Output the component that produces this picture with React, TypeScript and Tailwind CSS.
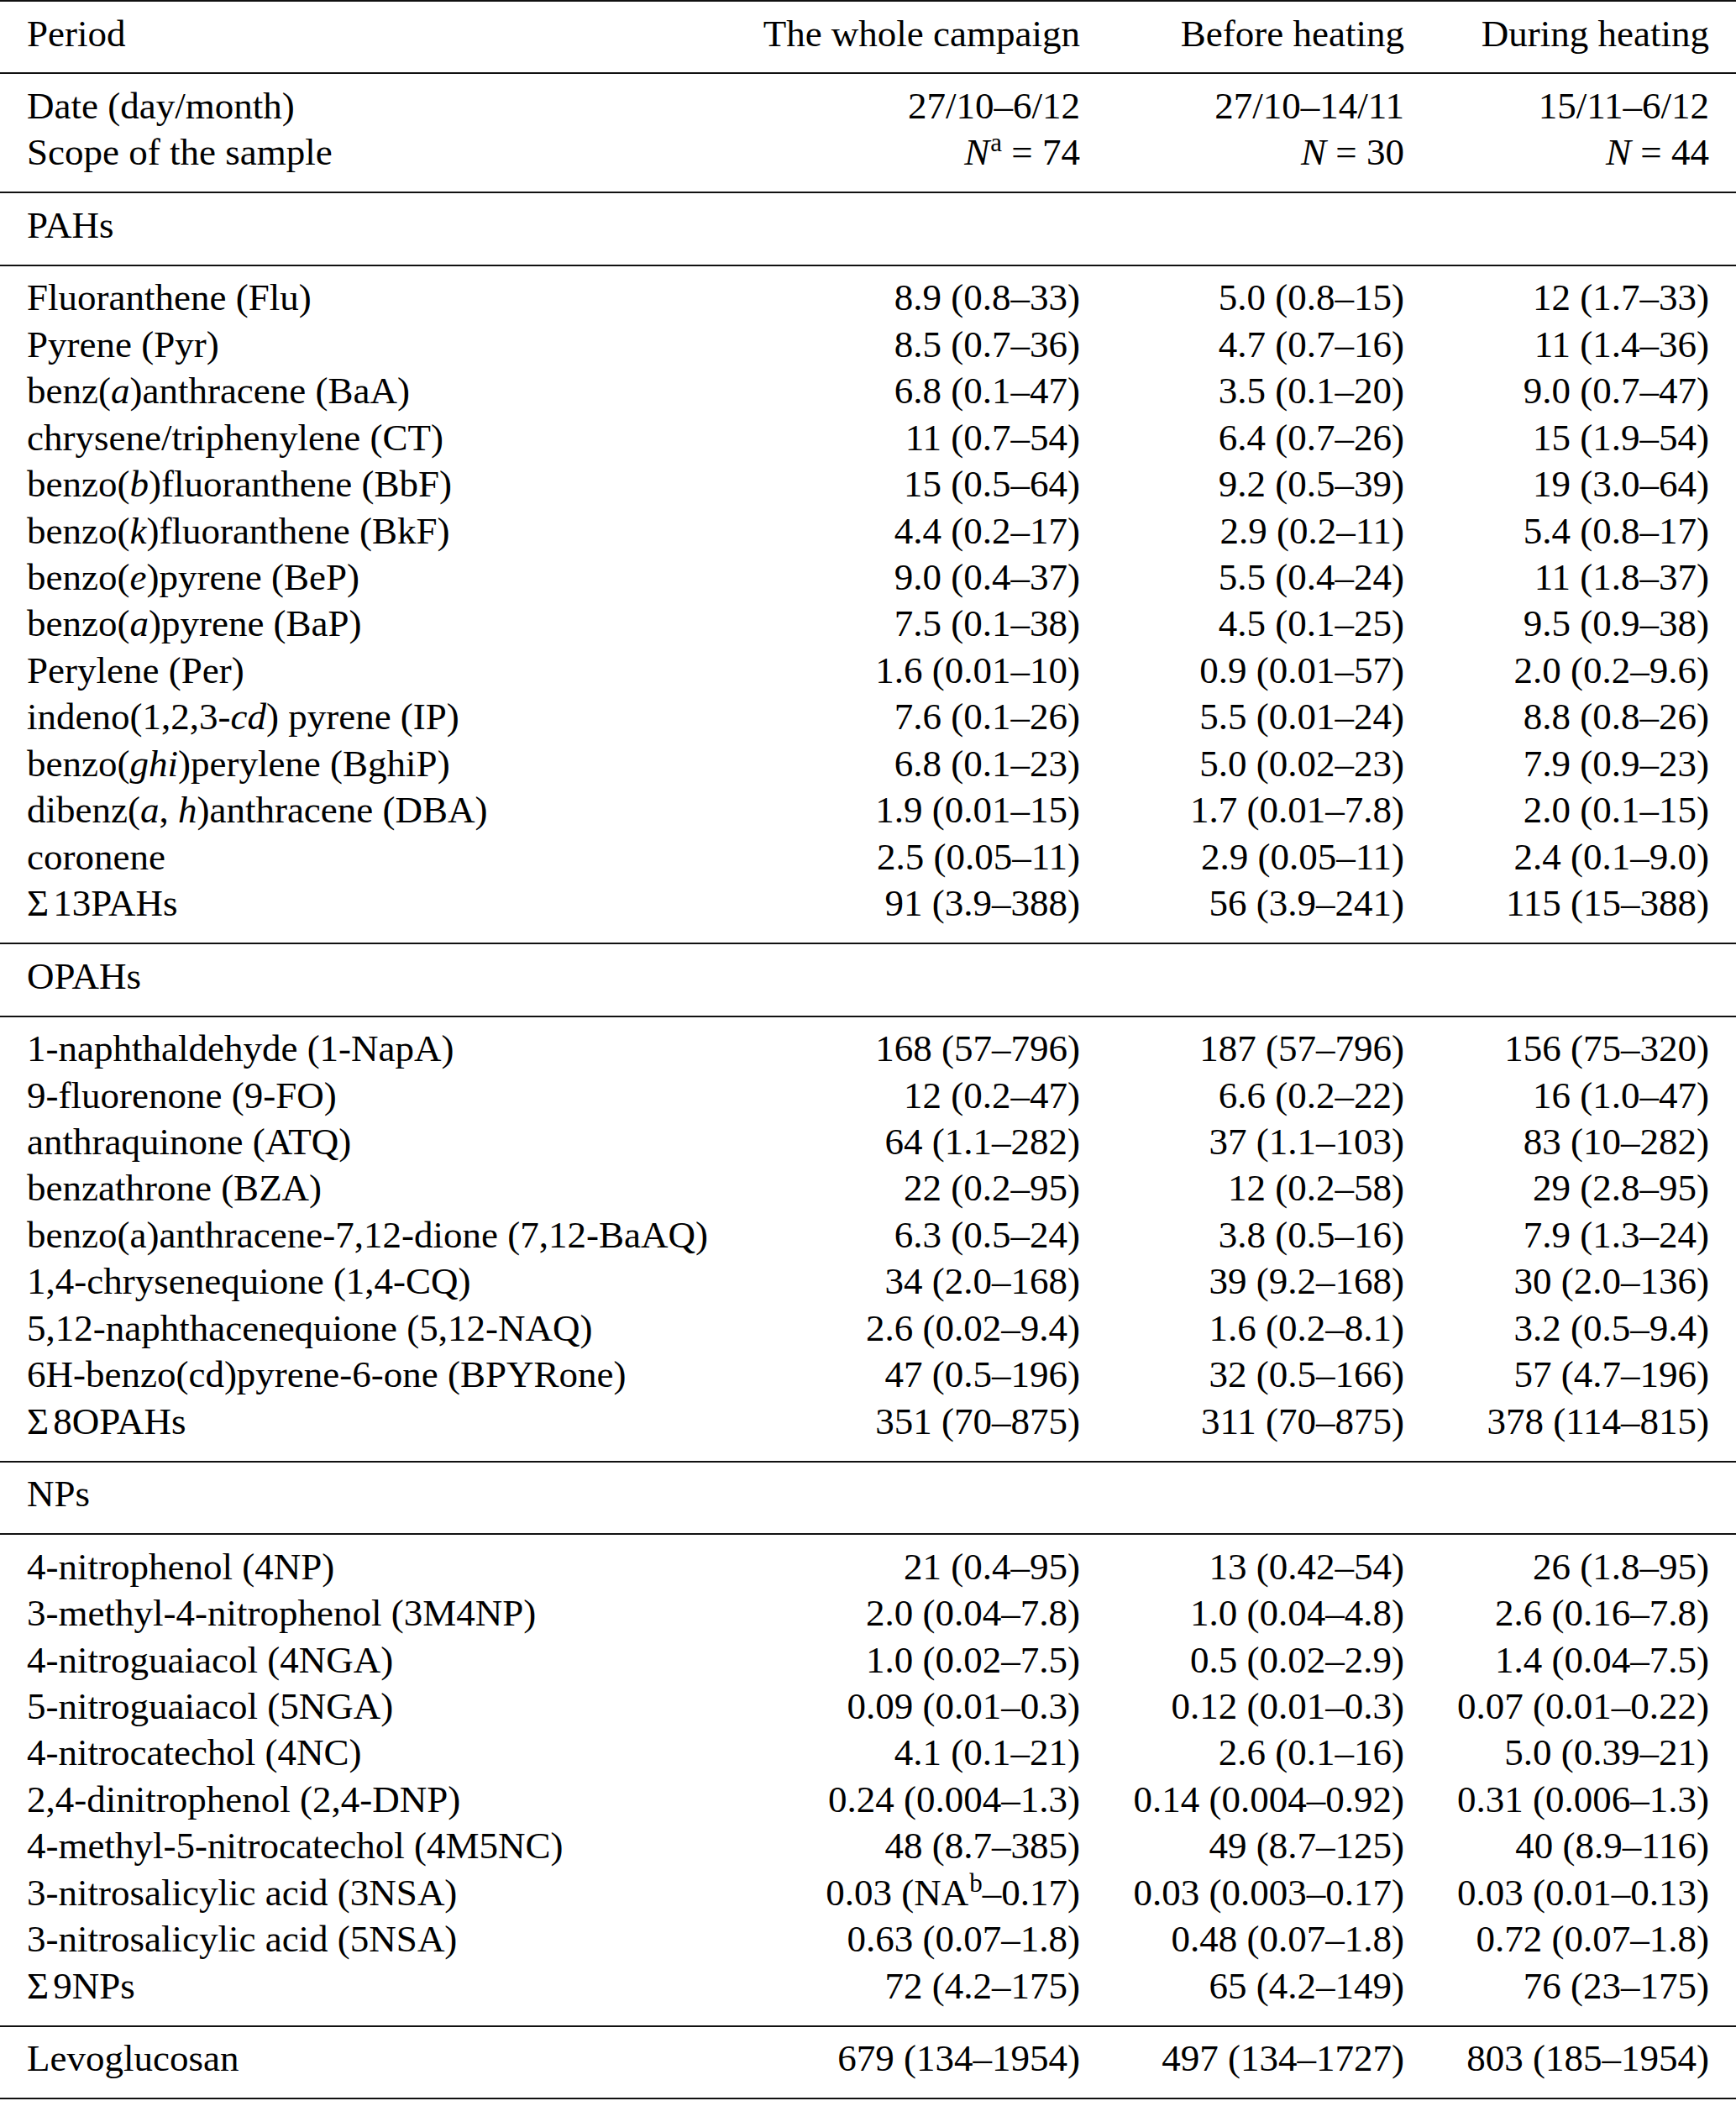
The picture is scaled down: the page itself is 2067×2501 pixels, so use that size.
import React from 'react';

type Row = [React.ReactNode, React.ReactNode, React.ReactNode, React.ReactNode];

const I = ({ children }: { children: React.ReactNode }) => <i className="italic">{children}</i>;
const Sup = ({ children }: { children: React.ReactNode }) => (
  <span className="relative -top-[16px] ml-[1px] text-[31px] leading-none">{children}</span>
);
const Sum = ({ children }: { children: React.ReactNode }) => (
  <>
    Σ<span className="ml-[5px]">{children}</span>
  </>
);

const pahs: Row[] = [
  ['Fluoranthene (Flu)', '8.9 (0.8–33)', '5.0 (0.8–15)', '12 (1.7–33)'],
  ['Pyrene (Pyr)', '8.5 (0.7–36)', '4.7 (0.7–16)', '11 (1.4–36)'],
  [<>benz(<I>a</I>)anthracene (BaA)</>, '6.8 (0.1–47)', '3.5 (0.1–20)', '9.0 (0.7–47)'],
  ['chrysene/triphenylene (CT)', '11 (0.7–54)', '6.4 (0.7–26)', '15 (1.9–54)'],
  [<>benzo(<I>b</I>)fluoranthene (BbF)</>, '15 (0.5–64)', '9.2 (0.5–39)', '19 (3.0–64)'],
  [<>benzo(<I>k</I>)fluoranthene (BkF)</>, '4.4 (0.2–17)', '2.9 (0.2–11)', '5.4 (0.8–17)'],
  [<>benzo(<I>e</I>)pyrene (BeP)</>, '9.0 (0.4–37)', '5.5 (0.4–24)', '11 (1.8–37)'],
  [<>benzo(<I>a</I>)pyrene (BaP)</>, '7.5 (0.1–38)', '4.5 (0.1–25)', '9.5 (0.9–38)'],
  ['Perylene (Per)', '1.6 (0.01–10)', '0.9 (0.01–57)', '2.0 (0.2–9.6)'],
  [<>indeno(1,2,3-<I>cd</I>) pyrene (IP)</>, '7.6 (0.1–26)', '5.5 (0.01–24)', '8.8 (0.8–26)'],
  [<>benzo(<I>ghi</I>)perylene (BghiP)</>, '6.8 (0.1–23)', '5.0 (0.02–23)', '7.9 (0.9–23)'],
  [<>dibenz(<I>a</I>, <I>h</I>)anthracene (DBA)</>, '1.9 (0.01–15)', '1.7 (0.01–7.8)', '2.0 (0.1–15)'],
  ['coronene', '2.5 (0.05–11)', '2.9 (0.05–11)', '2.4 (0.1–9.0)'],
  [<Sum>13PAHs</Sum>, '91 (3.9–388)', '56 (3.9–241)', '115 (15–388)'],
];

const opahs: Row[] = [
  ['1-naphthaldehyde (1-NapA)', '168 (57–796)', '187 (57–796)', '156 (75–320)'],
  ['9-fluorenone (9-FO)', '12 (0.2–47)', '6.6 (0.2–22)', '16 (1.0–47)'],
  ['anthraquinone (ATQ)', '64 (1.1–282)', '37 (1.1–103)', '83 (10–282)'],
  ['benzathrone (BZA)', '22 (0.2–95)', '12 (0.2–58)', '29 (2.8–95)'],
  ['benzo(a)anthracene-7,12-dione (7,12-BaAQ)', '6.3 (0.5–24)', '3.8 (0.5–16)', '7.9 (1.3–24)'],
  ['1,4-chrysenequione (1,4-CQ)', '34 (2.0–168)', '39 (9.2–168)', '30 (2.0–136)'],
  ['5,12-naphthacenequione (5,12-NAQ)', '2.6 (0.02–9.4)', '1.6 (0.2–8.1)', '3.2 (0.5–9.4)'],
  ['6H-benzo(cd)pyrene-6-one (BPYRone)', '47 (0.5–196)', '32 (0.5–166)', '57 (4.7–196)'],
  [<Sum>8OPAHs</Sum>, '351 (70–875)', '311 (70–875)', '378 (114–815)'],
];

const nps: Row[] = [
  ['4-nitrophenol (4NP)', '21 (0.4–95)', '13 (0.42–54)', '26 (1.8–95)'],
  ['3-methyl-4-nitrophenol (3M4NP)', '2.0 (0.04–7.8)', '1.0 (0.04–4.8)', '2.6 (0.16–7.8)'],
  ['4-nitroguaiacol (4NGA)', '1.0 (0.02–7.5)', '0.5 (0.02–2.9)', '1.4 (0.04–7.5)'],
  ['5-nitroguaiacol (5NGA)', '0.09 (0.01–0.3)', '0.12 (0.01–0.3)', '0.07 (0.01–0.22)'],
  ['4-nitrocatechol (4NC)', '4.1 (0.1–21)', '2.6 (0.1–16)', '5.0 (0.39–21)'],
  ['2,4-dinitrophenol (2,4-DNP)', '0.24 (0.004–1.3)', '0.14 (0.004–0.92)', '0.31 (0.006–1.3)'],
  ['4-methyl-5-nitrocatechol (4M5NC)', '48 (8.7–385)', '49 (8.7–125)', '40 (8.9–116)'],
  [
    '3-nitrosalicylic acid (3NSA)',
    <>0.03 (NA<Sup>b</Sup>–0.17)</>,
    '0.03 (0.003–0.17)',
    '0.03 (0.01–0.13)',
  ],
  ['3-nitrosalicylic acid (5NSA)', '0.63 (0.07–1.8)', '0.48 (0.07–1.8)', '0.72 (0.07–1.8)'],
  [<Sum>9NPs</Sum>, '72 (4.2–175)', '65 (4.2–149)', '76 (23–175)'],
];

const Rule = () => <div className="h-[2px] w-full bg-[#111]" />;

const Block = ({ rows }: { rows: Row[] }) => (
  <div className="px-[32px] pt-[10.5px] pb-[18.5px]">
    {rows.map((r, i) => (
      <div key={i} className="grid grid-cols-[874px_380px_386px_363px] whitespace-nowrap">
        <div>{r[0]}</div>
        <div className="text-right">{r[1]}</div>
        <div className="text-right">{r[2]}</div>
        <div className="text-right">{r[3]}</div>
      </div>
    ))}
  </div>
);

const App: React.FC = () => {
  return (
    <div className="w-[2067px] bg-white text-black font-['Liberation_Serif','Times_New_Roman',serif] text-[45px] leading-[55.45px]">
      <Rule />
      <Block rows={[['Period', 'The whole campaign', 'Before heating', 'During heating']]} />
      <Rule />
      <Block
        rows={[
          ['Date (day/month)', '27/10–6/12', '27/10–14/11', '15/11–6/12'],
          [
            'Scope of the sample',
            <>
              <I>N</I>
              <Sup>a</Sup> = 74
            </>,
            <>
              <I>N</I> = 30
            </>,
            <>
              <I>N</I> = 44
            </>,
          ],
        ]}
      />
      <Rule />
      <Block rows={[['PAHs', '', '', '']]} />
      <Rule />
      <Block rows={pahs} />
      <Rule />
      <Block rows={[['OPAHs', '', '', '']]} />
      <Rule />
      <Block rows={opahs} />
      <Rule />
      <Block rows={[['NPs', '', '', '']]} />
      <Rule />
      <Block rows={nps} />
      <Rule />
      <Block rows={[['Levoglucosan', '679 (134–1954)', '497 (134–1727)', '803 (185–1954)']]} />
      <Rule />
    </div>
  );
};

export default App;
